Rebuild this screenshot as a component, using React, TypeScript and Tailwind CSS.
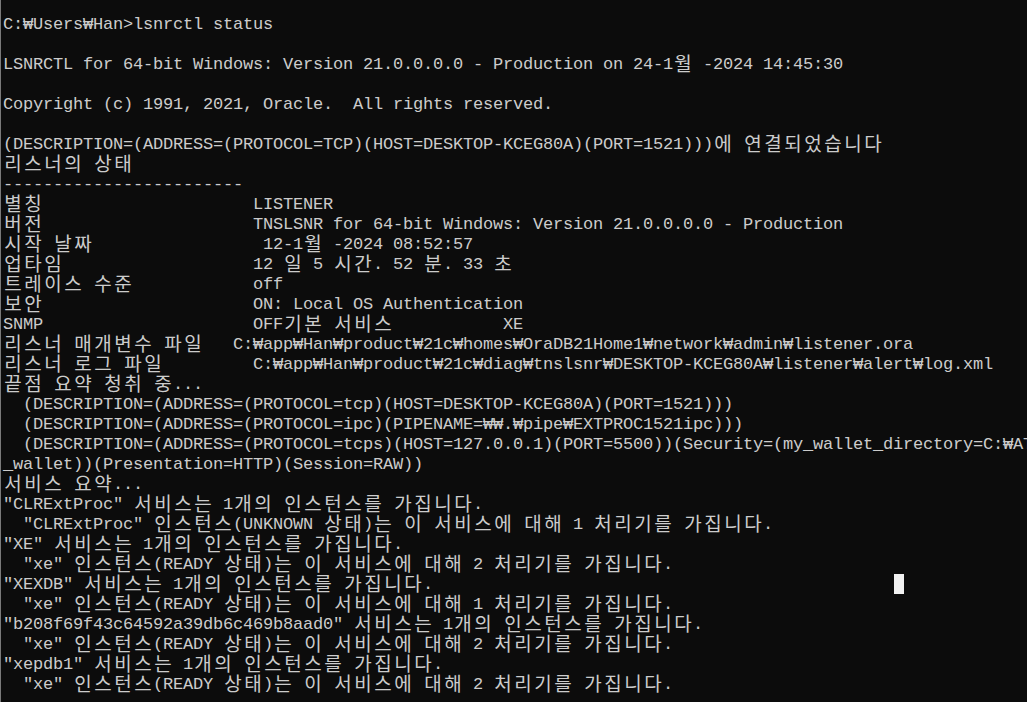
const lines: string[] = [
  'C:₩Users₩Han>lsnrctl status',
  '',
  'LSNRCTL for 64-bit Windows: Version 21.0.0.0.0 - Production on 24-1월 -2024 14:45:30',
  '',
  'Copyright (c) 1991, 2021, Oracle.  All rights reserved.',
  '',
  '(DESCRIPTION=(ADDRESS=(PROTOCOL=TCP)(HOST=DESKTOP-KCEG80A)(PORT=1521)))에 연결되었습니다',
  '리스너의 상태',
  '------------------------',
  '별칭                     LISTENER',
  '버전                     TNSLSNR for 64-bit Windows: Version 21.0.0.0.0 - Production',
  '시작 날짜                 12-1월 -2024 08:52:57',
  '업타임                   12 일 5 시간. 52 분. 33 초',
  '트레이스 수준            off',
  '보안                     ON: Local OS Authentication',
  'SNMP                     OFF기본 서비스           XE',
  '리스너 매개변수 파일   C:₩app₩Han₩product₩21c₩homes₩OraDB21Home1₩network₩admin₩listener.ora',
  '리스너 로그 파일         C:₩app₩Han₩product₩21c₩diag₩tnslsnr₩DESKTOP-KCEG80A₩listener₩alert₩log.xml',
  '끝점 요약 청취 중...',
  '  (DESCRIPTION=(ADDRESS=(PROTOCOL=tcp)(HOST=DESKTOP-KCEG80A)(PORT=1521)))',
  '  (DESCRIPTION=(ADDRESS=(PROTOCOL=ipc)(PIPENAME=₩₩.₩pipe₩EXTPROC1521ipc)))',
  '  (DESCRIPTION=(ADDRESS=(PROTOCOL=tcps)(HOST=127.0.0.1)(PORT=5500))(Security=(my_wallet_directory=C:₩ATEMP₩admin₩XE₩xdb',
  '_wallet))(Presentation=HTTP)(Session=RAW))',
  '서비스 요약...',
  '"CLRExtProc" 서비스는 1개의 인스턴스를 가집니다.',
  '  "CLRExtProc" 인스턴스(UNKNOWN 상태)는 이 서비스에 대해 1 처리기를 가집니다.',
  '"XE" 서비스는 1개의 인스턴스를 가집니다.',
  '  "xe" 인스턴스(READY 상태)는 이 서비스에 대해 2 처리기를 가집니다.',
  '"XEXDB" 서비스는 1개의 인스턴스를 가집니다.',
  '  "xe" 인스턴스(READY 상태)는 이 서비스에 대해 1 처리기를 가집니다.',
  '"b208f69f43c64592a39db6c469b8aad0" 서비스는 1개의 인스턴스를 가집니다.',
  '  "xe" 인스턴스(READY 상태)는 이 서비스에 대해 2 처리기를 가집니다.',
  '"xepdb1" 서비스는 1개의 인스턴스를 가집니다.',
  '  "xe" 인스턴스(READY 상태)는 이 서비스에 대해 2 처리기를 가집니다.',
]

const wide = /[\u1100-\u11FF\u3130-\u318F\uAC00-\uD7AF]/

// console cells: half-width 10px, hangul 20px, every row 20px tall
function Line({ text }: { text: string }) {
  return (
    <div className="flex h-[20px] items-start whitespace-pre">
      {Array.from(text).map((ch, i) =>
        wide.test(ch) ? (
          <span
            key={i}
            className="inline-block h-[20px] w-[20px] shrink-0 text-center font-['Noto_Sans_CJK_KR',sans-serif] text-[19px] leading-[20px]"
          >
            {ch}
          </span>
        ) : (
          <span key={i} className="inline-block h-[20px] w-[10px] shrink-0 text-center leading-[24px]">
            {ch}
          </span>
        )
      )}
    </div>
  )
}

export default function App() {
  return (
    <div className="relative h-[702px] w-[1027px] overflow-hidden border-l border-[#7a7a7a] bg-[#0c0c0c] pl-[2px] pt-[13px] font-['Liberation_Mono','DejaVu_Sans_Mono','Noto_Sans_CJK_KR',monospace] text-[17px] text-[#cccccc]">
      {lines.map((l, i) => (
        <Line key={i} text={l} />
      ))}
      <div className="absolute left-[893px] top-[574px] h-[20px] w-[10px] bg-[#f2f2f2]" />
    </div>
  )
}
